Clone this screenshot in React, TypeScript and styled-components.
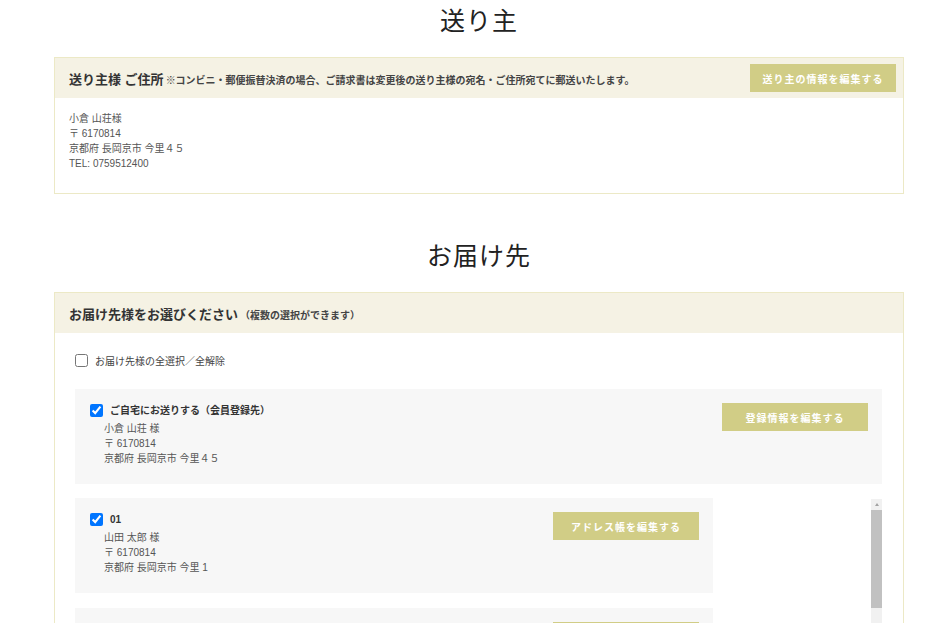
import React, { useState } from 'react'
import styled, { createGlobalStyle } from 'styled-components'

const GlobalStyle = createGlobalStyle`
  body {
    margin: 0;
    background: #fff;
    font-family: "Liberation Sans", "Noto Sans CJK JP", sans-serif;
    color: #555;
  }
`

const Page = styled.div`
  width: 850px;
  margin-left: 54px;
  padding-top: 7px;
`

const SectionTitle = styled.h2<{ $top?: number }>`
  margin: ${(p) => p.$top ?? 0}px 0 20px;
  text-align: center;
  font-family: "Liberation Serif", "Noto Sans CJK JP", serif;
  font-size: 25px;
  font-weight: 400;
  line-height: 30px;
  color: #222;
  letter-spacing: 1px;
`

const Panel = styled.section`
  border: 1px solid #ece9c6;
  background: #fff;
`

const PanelHead = styled.div`
  display: flex;
  align-items: center;
  justify-content: space-between;
  height: 40px;
  padding: 0 7px 0 14px;
  background: #f5f2e4;
`

const HeadTitle = styled.h3`
  margin: 0;
  font-size: 13px;
  font-weight: 700;
  color: #333;
  white-space: nowrap;
`

const HeadNote = styled.span`
  margin-left: 2px;
  font-size: 10px;
  font-weight: 700;
  color: #444;
`

const EditButton = styled.button`
  width: 146px;
  height: 28px;
  flex-shrink: 0;
  border: none;
  background: #d1cd86;
  color: #fff;
  font-family: "Liberation Sans", "Noto Sans CJK JP", sans-serif;
  font-size: 10px;
  font-weight: 700;
  letter-spacing: 1px;
  cursor: pointer;
`

const SenderBody = styled.div`
  padding: 13px 14px 22px;
  font-size: 10px;
  line-height: 15px;
  color: #555;
`

const Line = styled.div``

const DestBody = styled.div`
  padding: 20px 21px 0 20px;
`

const SelectAll = styled.label`
  display: flex;
  align-items: center;
  gap: 7px;
  font-size: 10px;
  color: #444;
  cursor: pointer;
`

const Check = styled.input.attrs({ type: 'checkbox' })`
  width: 13px;
  height: 13px;
  margin: 0;
  flex-shrink: 0;
`

const Card = styled.div`
  display: flex;
  justify-content: space-between;
  align-items: flex-start;
  height: 95px;
  box-sizing: border-box;
  padding: 14px 14px 0 15px;
  background: #f7f7f7;
  flex-shrink: 0;
`

const CardInfo = styled.div`
  font-size: 10px;
  line-height: 15px;
  color: #555;
`

const CardTitle = styled.label`
  display: flex;
  align-items: center;
  gap: 7px;
  font-weight: 700;
  color: #333;
  margin-bottom: 3px;
  cursor: pointer;
`

const CardLines = styled.div`
  padding-left: 14px;
`

const HomeWrap = styled.div`
  margin-top: 21px;
  margin-bottom: 14px;
`

const ListFrame = styled.div`
  display: flex;
  justify-content: space-between;
  height: 300px;
`

const AddressList = styled.div`
  display: flex;
  flex-direction: column;
  gap: 15px;
  width: 638px;
  overflow: hidden;
`

const ScrollTrack = styled.div`
  display: flex;
  flex-direction: column;
  width: 11px;
  margin-top: 1px;
  background: #f1f1f1;
`

const ScrollArrow = styled.div`
  display: flex;
  align-items: center;
  justify-content: center;
  height: 11px;

  &::before {
    content: '';
    border-left: 2.5px solid transparent;
    border-right: 2.5px solid transparent;
    border-bottom: 3px solid #a3a3a3;
  }
`

const ScrollThumb = styled.div`
  height: 98px;
  background: #c1c1c1;
`

type Address = { id: string; name: string; zip: string; addr: string }

const addresses: Address[] = [
  { id: '01', name: '山田 太郎 様', zip: '〒 6170814', addr: '京都府 長岡京市 今里 1' },
  { id: '02', name: '山田 花子 様', zip: '〒 6170814', addr: '京都府 長岡京市 今里 2' },
  { id: '03', name: '佐藤 一郎 様', zip: '〒 6170814', addr: '京都府 長岡京市 今里 3' },
]

const App = (): JSX.Element => {
  const [all, setAll] = useState(false)
  const [home, setHome] = useState(true)
  const [checked, setChecked] = useState<Record<string, boolean>>({ '01': true })

  const toggle = (id: string): void => {
    setChecked({ ...checked, [id]: !checked[id] })
  }

  return (
    <Page>
      <GlobalStyle />
      <SectionTitle>送り主</SectionTitle>
      <Panel>
        <PanelHead>
          <HeadTitle>
            送り主様 ご住所
            <HeadNote>※コンビニ・郵便振替決済の場合、ご請求書は変更後の送り主様の宛名・ご住所宛てに郵送いたします。</HeadNote>
          </HeadTitle>
          <EditButton>送り主の情報を編集する</EditButton>
        </PanelHead>
        <SenderBody>
          <Line>小倉 山荘様</Line>
          <Line>〒 6170814</Line>
          <Line>京都府 長岡京市 今里４５</Line>
          <Line>TEL: 0759512400</Line>
        </SenderBody>
      </Panel>

      <SectionTitle $top={48}>お届け先</SectionTitle>
      <Panel>
        <PanelHead>
          <HeadTitle>
            お届け先様をお選びください
            <HeadNote>（複数の選択ができます）</HeadNote>
          </HeadTitle>
        </PanelHead>
        <DestBody>
          <SelectAll>
            <Check checked={all} onChange={() => { setAll(!all) }} />
            お届け先様の全選択／全解除
          </SelectAll>
          <HomeWrap>
            <Card>
              <CardInfo>
                <CardTitle>
                  <Check checked={home} onChange={() => { setHome(!home) }} />
                  ご自宅にお送りする（会員登録先）
                </CardTitle>
                <CardLines>
                  <Line>小倉 山荘 様</Line>
                  <Line>〒 6170814</Line>
                  <Line>京都府 長岡京市 今里４５</Line>
                </CardLines>
              </CardInfo>
              <EditButton>登録情報を編集する</EditButton>
            </Card>
          </HomeWrap>
          <ListFrame>
            <AddressList>
              {addresses.map((a) => (
                <Card key={a.id}>
                  <CardInfo>
                    <CardTitle>
                      <Check checked={!!checked[a.id]} onChange={() => { toggle(a.id) }} />
                      {a.id}
                    </CardTitle>
                    <CardLines>
                      <Line>{a.name}</Line>
                      <Line>{a.zip}</Line>
                      <Line>{a.addr}</Line>
                    </CardLines>
                  </CardInfo>
                  <EditButton>アドレス帳を編集する</EditButton>
                </Card>
              ))}
            </AddressList>
            <ScrollTrack>
              <ScrollArrow />
              <ScrollThumb />
            </ScrollTrack>
          </ListFrame>
        </DestBody>
      </Panel>
    </Page>
  )
}

export default App
